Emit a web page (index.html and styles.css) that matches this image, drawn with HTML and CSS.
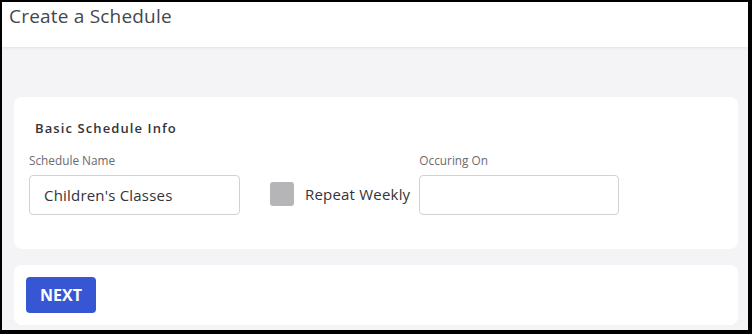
FILE: index.html
```html
<!DOCTYPE html>
<html>
<head>
<meta charset="utf-8">
<link rel="stylesheet" href="styles.css">
</head>
<body>
<div class="page">
  <header class="topbar">
    <h1 class="title">Create a Schedule</h1>
  </header>
  <main class="content">
    <section class="card info">
      <h2 class="card-title">Basic Schedule Info</h2>
      <div class="fields">
        <div class="field name-field">
          <label class="label">Schedule Name</label>
          <div class="input">Children's Classes</div>
        </div>
        <div class="check-field">
          <span class="checkbox"></span>
          <span class="check-label">Repeat Weekly</span>
        </div>
        <div class="field date-field">
          <label class="label">Occuring On</label>
          <div class="input"></div>
        </div>
      </div>
    </section>
    <section class="card actions">
      <button class="btn">NEXT</button>
    </section>
  </main>
</div>
</body>
</html>
```
FILE: styles.css
```css
html, body {
  margin: 0;
  padding: 0;
  background: #000;
  height: 334px;
  overflow: hidden;
}
body {
  padding: 2px 4px 4px 2px;
  box-sizing: border-box;
  font-family: "Open Sans", "Liberation Sans", sans-serif;
}
.page {
  height: 328px;
  background: #f4f4f6;
  display: flex;
  flex-direction: column;
}
.topbar {
  height: 45px;
  background: #fff;
  box-shadow: 0 1px 3px rgba(0,0,0,0.08);
  padding-left: 7px;
  box-sizing: border-box;
}
.title {
  margin: 0;
  font-size: 19px;
  font-weight: 400;
  letter-spacing: 0.2px;
  color: #46464b;
  line-height: 28px;
}
.content {
  padding: 50px 10px 0 12px;
  display: flex;
  flex-direction: column;
  gap: 16px;
}
.card {
  background: #fff;
  border-radius: 8px;
}
.info {
  height: 152px;
  box-sizing: border-box;
  padding: 22px 15px 0 15px;
}
.card-title {
  margin: 0 0 0 6px;
  font-size: 13px;
  font-weight: 600;
  letter-spacing: 1.1px;
  color: #333338;
  line-height: 18px;
}
.fields {
  display: flex;
  align-items: flex-start;
  margin-top: 15px;
}
.field {
  display: flex;
  flex-direction: column;
}
.label {
  font-size: 11.8px;
  color: #6a6a70;
  line-height: 16px;
  margin-bottom: 7px;
}
.input {
  height: 40px;
  box-sizing: border-box;
  border: 1px solid #d2d2d6;
  border-radius: 4px;
  font-size: 15px;
  letter-spacing: 0.2px;
  color: #333338;
  padding-left: 14px;
  line-height: 38px;
}
.name-field .input { width: 211px; }
.date-field .input { width: 200px; }
.check-field {
  display: flex;
  align-items: center;
  margin-top: 30px;
  margin-left: 30px;
  height: 24px;
}
.checkbox {
  width: 24px;
  height: 24px;
  border-radius: 3px;
  background: #b5b5b7;
}
.check-label {
  margin-left: 11px;
  font-size: 15px;
  color: #333338;
  margin-right: 9px;
  letter-spacing: 0.2px;
}
.actions {
  height: 60px;
  box-sizing: border-box;
  padding: 12px 12px;
}
.btn {
  width: 70px;
  height: 36px;
  border: 0;
  border-radius: 4px;
  background: #3756d4;
  color: #fff;
  font-family: "Open Sans", "Liberation Sans", sans-serif;
  font-weight: 700;
  font-size: 16px;
  padding: 0;
}
```
